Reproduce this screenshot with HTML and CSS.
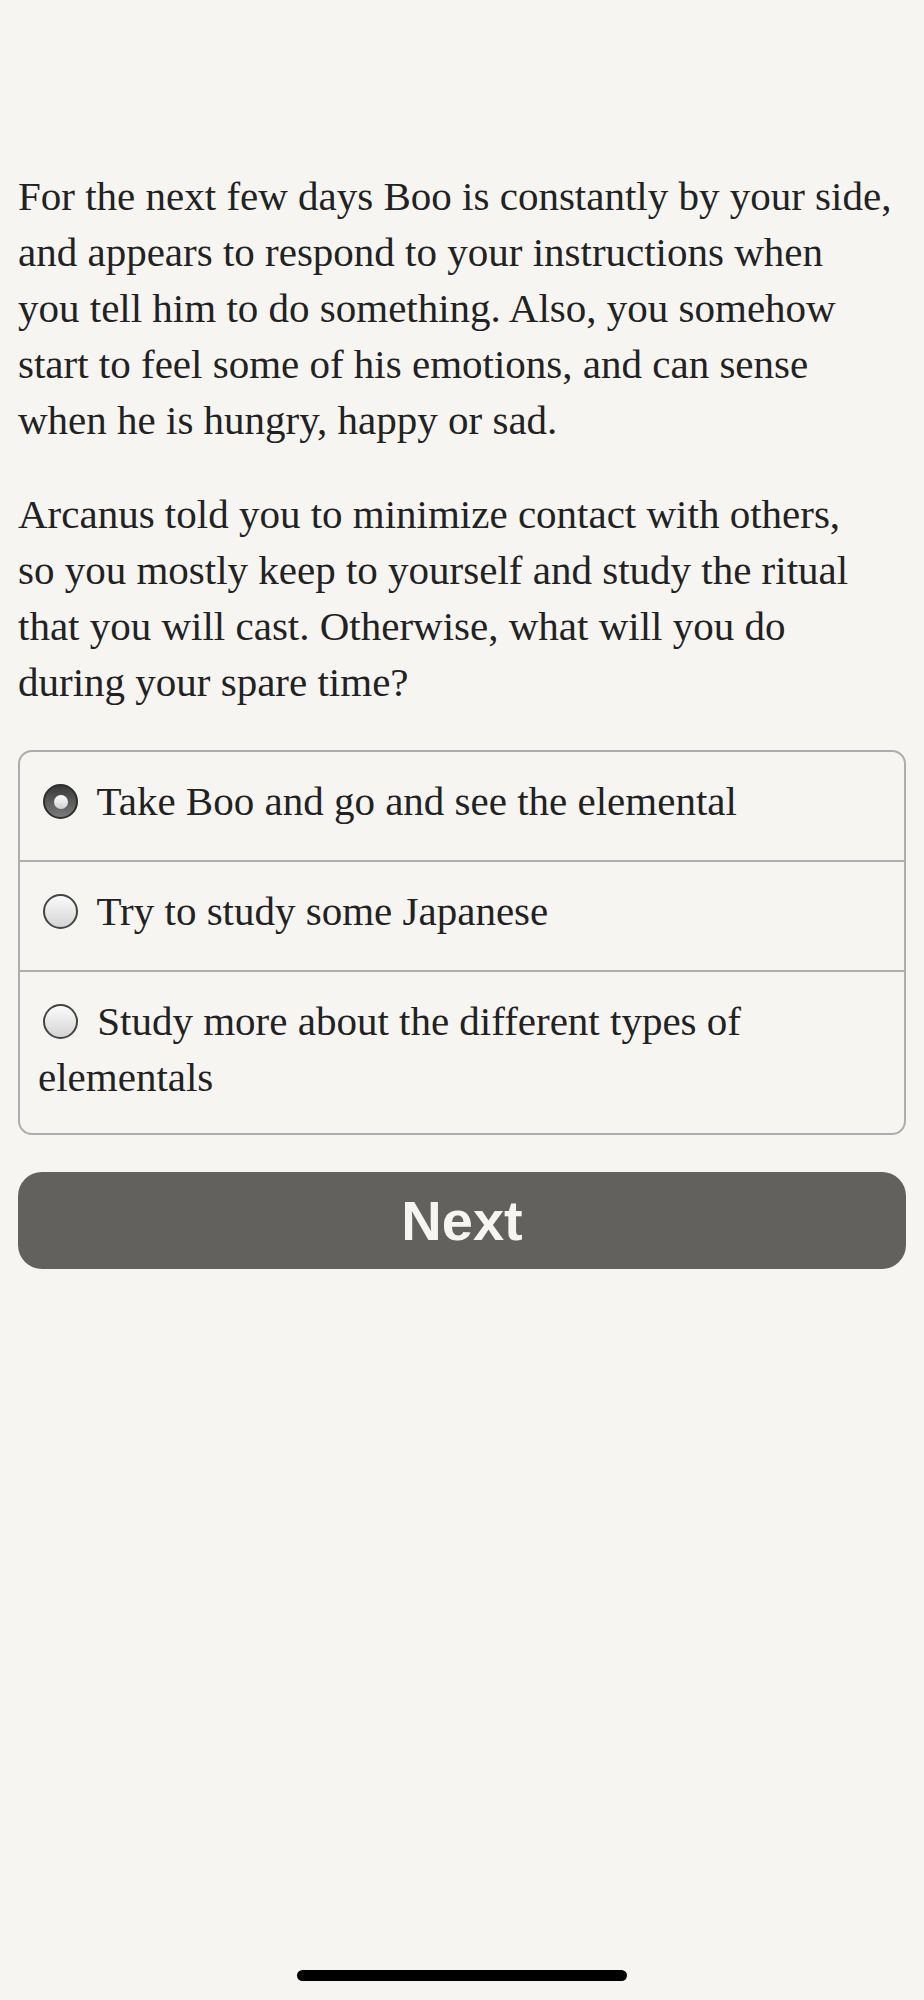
FILE: index.html
```html
<!DOCTYPE html>
<html lang="en">
<head>
  <meta charset="UTF-8">
  <meta name="viewport" content="width=device-width, initial-scale=1.0">
  <title>Boo</title>
  <link rel="stylesheet" href="styles.css">
</head>
<body>
  <main class="story">
    <p class="passage">For the next few days Boo is constantly by your side,<br>
      and appears to respond to your instructions when<br>
      you tell him to do something. Also, you somehow<br>
      start to feel some of his emotions, and can sense<br>
      when he is hungry, happy or sad.</p>
    <p class="passage">Arcanus told you to minimize contact with others,<br>
      so you mostly keep to yourself and study the ritual<br>
      that you will cast. Otherwise, what will you do<br>
      during your spare time?</p>

    <form class="choices">
      <ul class="choice-list">
        <li class="choice">
          <label><input type="radio" name="choice" checked> Take Boo and go and see the elemental</label>
        </li>
        <li class="choice">
          <label><input type="radio" name="choice"> Try to study some Japanese</label>
        </li>
        <li class="choice">
          <label><input type="radio" name="choice"> Study more about the different types of elementals</label>
        </li>
      </ul>
      <button type="submit" class="next-button">Next</button>
    </form>
  </main>

  <!-- iOS home bar -->
  <div class="home-indicator"></div>
</body>
</html>
```

FILE: styles.css
```css
/* Page */
body {
  margin: 0;
  padding: 168px 18px 0 18px;
  background-color: #f7f5f2;
  color: #222;
  font-family: "Palatino Linotype", Palatino, "Book Antiqua", "Liberation Serif", serif;
  font-size: 41px;
  line-height: 56px;
  min-height: 2000px;
  box-sizing: border-box;
  position: relative;
}

/* Story text */
.passage {
  margin: 0 0 38px;
}

.passage:last-of-type {
  margin-bottom: 40px;
}

/* Choice list */
.choice-list {
  list-style: none;
  margin: 0;
  padding: 0;
  border: 2px solid #abadaf;
  border-radius: 14px;
}

.choice {
  padding: 21px 18px 31px;
  border-top: 2px solid #abadaf;
}

.choice:first-child {
  border-top: none;
}

.choice:last-child {
  padding-bottom: 28px;
}

.choice label {
  display: block;
}

/* Radio buttons */
.choice input[type="radio"] {
  -webkit-appearance: none;
  appearance: none;
  display: inline-block;
  width: 35px;
  height: 35px;
  margin: 0 9px 0 5px;
  vertical-align: -4px;
  border: 2px solid #444;
  border-radius: 50%;
  box-sizing: border-box;
  background: linear-gradient(#fbfbfb, #d4d4d4);
}

.choice input[type="radio"]:checked {
  border-color: #2e2e2e;
  background: linear-gradient(#3a3a3a, #7a7a7a);
  position: relative;
}

.choice input[type="radio"]:checked::after {
  content: "";
  position: absolute;
  top: 8.5px;
  left: 8.5px;
  width: 14px;
  height: 14px;
  border-radius: 50%;
  background: linear-gradient(#ffffff, #cfcfcf);
}

/* Next button */
.next-button {
  display: block;
  width: 100%;
  height: 97px;
  margin-top: 37px;
  border: none;
  border-radius: 24px;
  background-color: #63615e;
  color: #f7f5f2;
  font-family: "Liberation Sans", Arial, sans-serif;
  font-weight: bold;
  font-size: 56px;
}

/* Home indicator */
.home-indicator {
  position: absolute;
  left: 297px;
  top: 1970px;
  width: 330px;
  height: 11px;
  border-radius: 6px;
  background-color: #000;
}
```
